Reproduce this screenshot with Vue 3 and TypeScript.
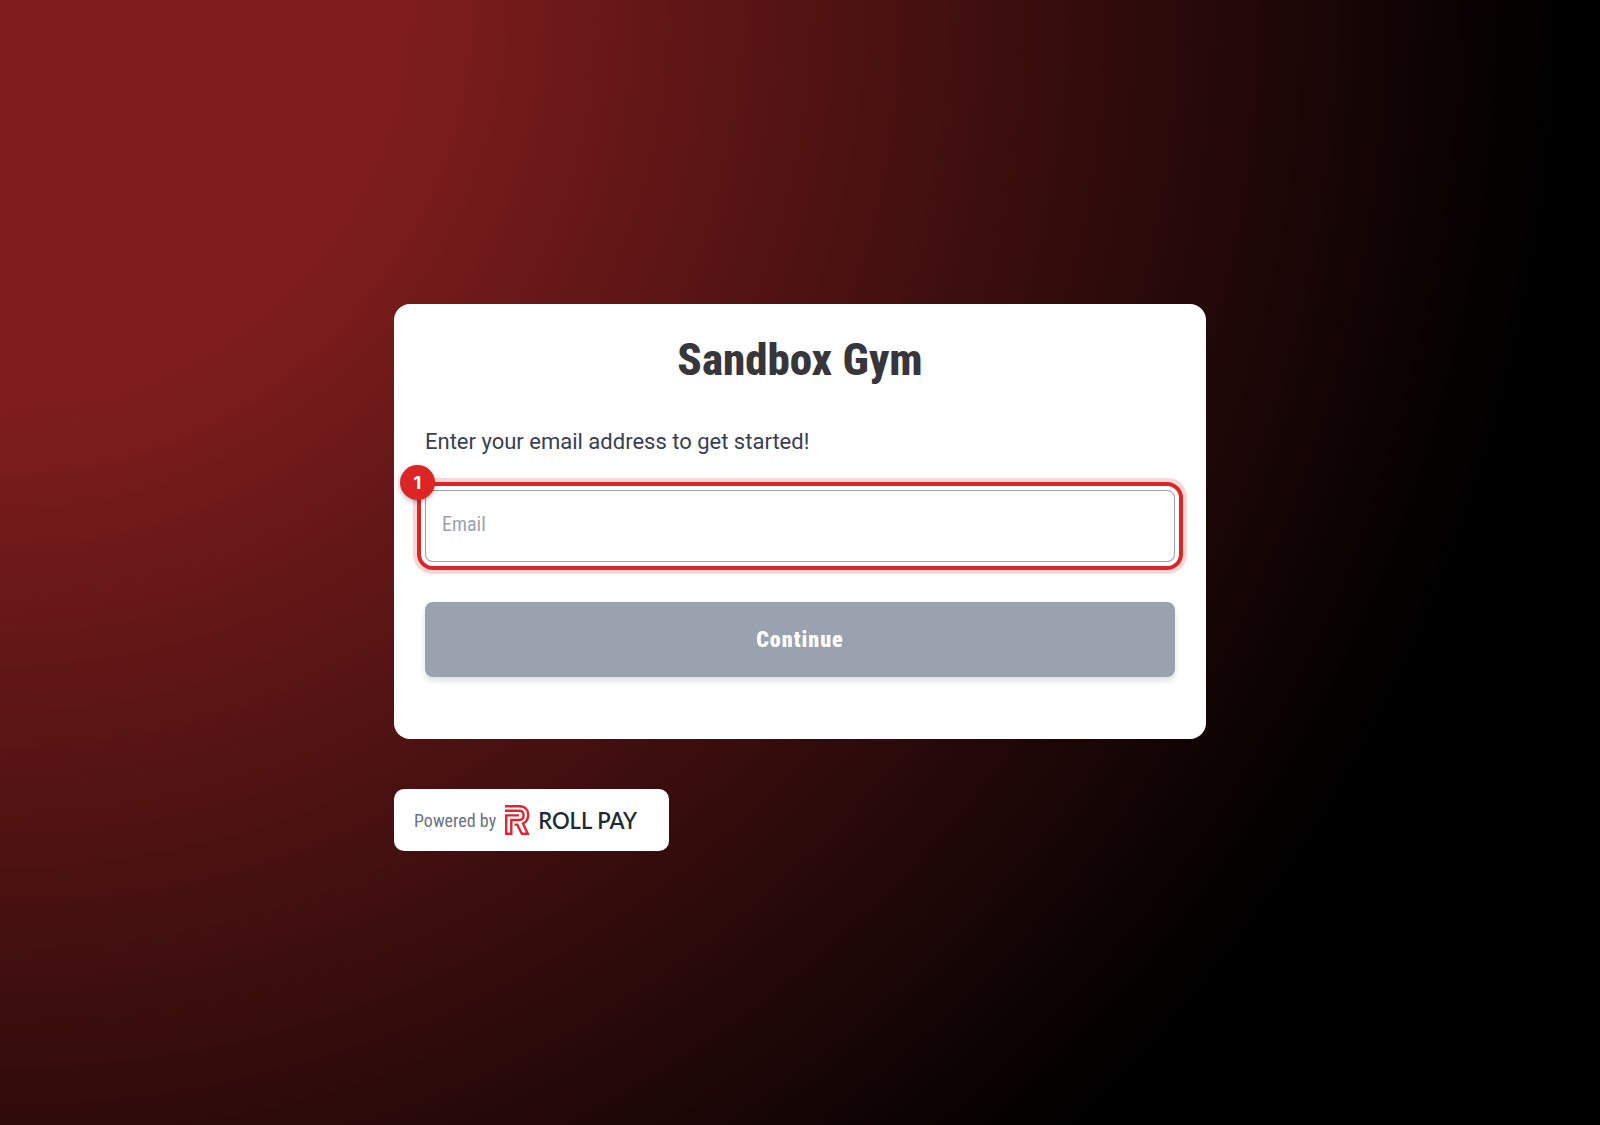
<script setup lang="ts">
import { ref } from 'vue'

const email = ref('')
</script>

<template>
  <div class="page">
    <main class="column">
      <section class="card">
        <h1 class="title">Sandbox Gym</h1>
        <form class="form" @submit.prevent>
          <label class="prompt" for="email">Enter your email address to get started!</label>
          <div class="field">
            <input id="email" v-model="email" class="input" type="email" placeholder="Email" />
            <span class="badge">1</span>
          </div>
          <button class="submit" type="submit">Continue</button>
        </form>
      </section>
      <footer class="powered">
        <span class="powered-text">Powered by</span>
        <span class="brand">
          <svg class="brand-mark" viewBox="0 0 25 30" fill="none" stroke="#e0262f" stroke-width="2.4" aria-hidden="true">
            <path d="M0 1.200H14.500C20.500 1.200 23.200 5.500 23.200 10C23.200 14 21.200 17 18 18.600L22.800 28.800H16.800L12.300 19.600H9.500" />
            <path d="M0 5.800H14C17 5.800 18.600 7.800 18.600 10.300C18.600 13 17 15 14 15H6.300V28.800H1.200V10.400H14" />
          </svg>
          <span class="brand-name">ROLL PAY</span>
        </span>
      </footer>
    </main>
  </div>
</template>

<style>
body {
  margin: 0;
}
</style>

<style scoped>
.page {
  box-sizing: border-box;
  min-height: 100vh;
  padding: 32px;
  display: flex;
  align-items: center;
  justify-content: center;
  background: radial-gradient(circle at left top, #7f1d1d 400px, #000 1560px);
  font-family: "Roboto Condensed", "Liberation Sans Narrow", Roboto, sans-serif;
}

.column {
  width: 100%;
  max-width: 812px;
  padding-top: 30px;
  display: flex;
  flex-direction: column;
  align-items: flex-start;
  gap: 50px;
}

.card {
  box-sizing: border-box;
  width: 100%;
  padding: 30px 31px 62px;
  border-radius: 16px;
  background: #fff;
}

.title {
  margin: 0 0 34px;
  color: #36363b;
  font-size: 45px;
  line-height: 52px;
  font-weight: 800;
  text-align: center;
}

.form {
  display: flex;
  flex-direction: column;
}

.prompt {
  margin-bottom: 26px;
  color: #374151;
  font-family: Roboto, sans-serif;
  font-size: 22px;
  line-height: 44px;
}

.field {
  position: relative;
  display: flex;
  margin-bottom: 40px;
  border-radius: 8px;
  box-shadow: 0 0 0 4px #fff, 0 0 0 8px #dc2626, 0 0 0 12px #f8d6d6;
}

.input {
  box-sizing: border-box;
  width: 100%;
  height: 72px;
  padding: 0 16px 4px;
  border: 1px solid #94a3b8;
  border-radius: 8px;
  outline: none;
  background: #fff;
  color: #374151;
  font-family: inherit;
  font-size: 20px;
}

.input::placeholder {
  color: #9ca3af;
  opacity: 1;
}

.badge {
  position: absolute;
  top: -25px;
  left: -25px;
  width: 35px;
  height: 35px;
  border-radius: 50%;
  background: #dc2626;
  box-shadow: 0 2px 5px rgba(0, 0, 0, 0.3);
  color: #fff;
  font-family: Inter, sans-serif;
  font-size: 18px;
  line-height: 35px;
  font-weight: 700;
  text-align: center;
}

.submit {
  height: 75px;
  border: 0;
  border-radius: 8px;
  background: #9aa1af;
  box-shadow: 0 4px 6px rgba(0, 0, 0, 0.12);
  color: #fff;
  font-family: inherit;
  font-size: 22px;
  font-weight: 900;
  letter-spacing: 1px;
}

.powered {
  height: 62px;
  padding: 0 32px 0 20px;
  display: flex;
  align-items: center;
  gap: 9px;
  border-radius: 10px;
  background: #fff;
}

.powered-text {
  color: #6b7280;
  font-size: 18px;
}

.brand {
  display: flex;
  align-items: center;
  gap: 8px;
}

.brand-mark {
  width: 25px;
  height: 30px;
}

.brand-name {
  color: #1f2b33;
  font-family: Lato, sans-serif;
  font-size: 22px;
  font-weight: 600;
}
</style>
